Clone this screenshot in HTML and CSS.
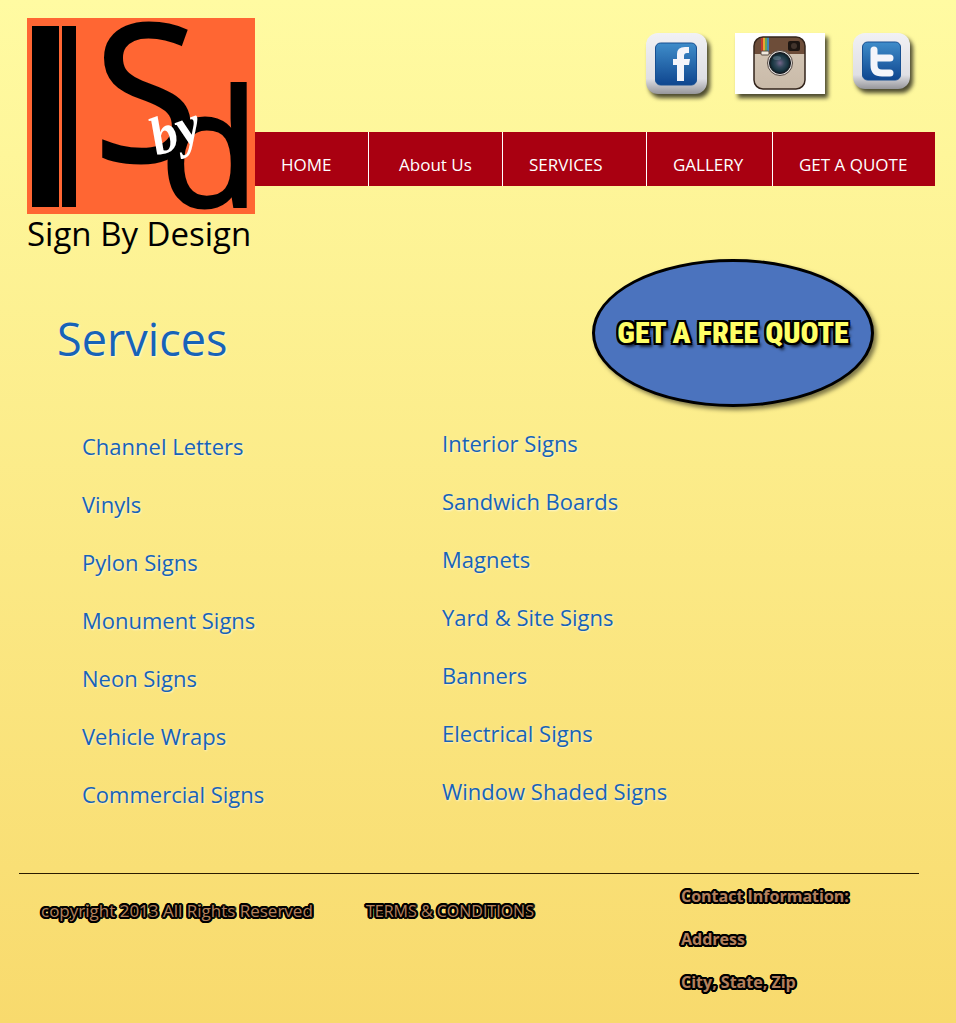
FILE: index.html
```html
<!DOCTYPE html>
<html lang="en">
<head>
<meta charset="utf-8">
<meta name="viewport" content="width=device-width, initial-scale=1">
<title>Sign By Design - Services</title>
<link rel="stylesheet" href="styles.css">
</head>
<body>
<header class="site-header">
  <a class="logo" href="#">
    <svg class="logo-mark" viewBox="0 0 228 196" aria-label="S by d">
      <rect width="228" height="196" fill="#ff6633"/>
      <rect x="5" y="8" width="27" height="181"/>
      <rect x="35" y="8" width="14" height="181"/>
      <text class="logo-s" x="67" y="143">S</text>
      <text class="logo-d" x="133" y="188">d</text>
      <text class="logo-by" transform="translate(130 138) rotate(-20)">by</text>
    </svg>
    <span class="logo-name">Sign By Design</span>
  </a>
  <div class="header-side">
    <div class="social">
      <a class="social-link" href="#" aria-label="Facebook">
        <svg width="62" height="62" viewBox="0 0 62 62">
          <defs>
            <linearGradient id="frame" x1="0" y1="0" x2="0" y2="1"><stop offset="0" stop-color="#f1f1f4"/><stop offset=".75" stop-color="#dfdfe4"/><stop offset="1" stop-color="#96969a"/></linearGradient>
            <linearGradient id="blue" x1="0" y1="0" x2="0" y2="1"><stop offset="0" stop-color="#3f8dca"/><stop offset="1" stop-color="#0f468f"/></linearGradient>
          </defs>
          <rect x="0" y="0" width="61" height="61" rx="12" fill="url(#frame)"/>
          <rect x="9.500" y="10" width="41" height="42" rx="5" fill="url(#blue)" stroke="#174f91"/>
          <path d="M43 14h-4q-8 0-8 7v5h-4v6h4v16h7V32h5l1-6h-6v-3q0-3 3-3h2z" fill="#f4f5fa"/>
        </svg>
      </a>
      <a class="social-link" href="#" aria-label="Instagram">
        <svg width="90" height="62" viewBox="0 0 90 62">
          <defs>
            <linearGradient id="case" x1="0" y1="0" x2="0" y2="1"><stop offset="0" stop-color="#d6c9b7"/><stop offset="1" stop-color="#c9baa9"/></linearGradient>
            <radialGradient id="lens"><stop offset="0" stop-color="#74658a"/><stop offset=".4" stop-color="#35495b"/><stop offset=".75" stop-color="#183540"/><stop offset="1" stop-color="#111a22"/></radialGradient>
            <clipPath id="body"><rect x="19" y="4" width="51" height="52" rx="9"/></clipPath>
          </defs>
          <rect width="90" height="61" fill="#fff"/>
          <g clip-path="url(#body)">
            <rect x="19" y="4" width="51" height="52" fill="url(#case)"/>
            <rect x="19" y="4" width="51" height="17" fill="#6d4d39"/>
            <path d="M26 4h2v15h-2z" fill="#c33b2f"/><path d="M28 4h2v15h-2z" fill="#e8a530"/><path d="M30 4h2v15h-2z" fill="#64a45a"/><path d="M32 4h2v15h-2z" fill="#3f86bb"/>
          </g>
          <rect x="19" y="4" width="51" height="52" rx="9" fill="none" stroke="#33241b" stroke-width="1.500"/>
          <rect x="53" y="8" width="12" height="10" rx="2" fill="#1d1511"/>
          <circle cx="59" cy="13" r="3" fill="#42342c"/>
          <rect x="26" y="18" width="8" height="4" rx="1" fill="#f0eadf" stroke="#564b42"/>
          <circle cx="45" cy="30" r="12.500" fill="#dedad7" stroke="#574b44"/>
          <circle cx="45" cy="30" r="10.500" fill="url(#lens)" stroke="#10151a"/>
          <ellipse cx="42" cy="25" rx="4" ry="2" fill="#8ba6b5" opacity=".35"/>
        </svg>
      </a>
      <a class="social-link" href="#" aria-label="Twitter">
        <svg width="60" height="60" viewBox="0 0 60 60">
          <rect x="1" y="0" width="57" height="56" rx="12" fill="url(#frame)"/>
          <rect x="10.500" y="9" width="38" height="38" rx="5" fill="url(#blue)" stroke="#174f91"/>
          <path d="M22 17v15q0 8 8 8h8M22 25h16" fill="none" stroke="#f4f5fa" stroke-width="7" stroke-linecap="round" stroke-linejoin="round"/>
        </svg>
      </a>
    </div>
    <nav class="nav" aria-label="Main">
      <a class="nav-item" href="#">HOME</a>
      <a class="nav-item nav-about" href="#">About Us</a>
      <a class="nav-item" href="#">SERVICES</a>
      <a class="nav-item" href="#">GALLERY</a>
      <a class="nav-item" href="#">GET A QUOTE</a>
    </nav>
  </div>
</header>
<main>
  <div class="intro">
    <h1 class="title">Services</h1>
    <a class="quote" href="#">GET A FREE QUOTE</a>
  </div>
  <div class="services">
    <ul class="service-list service-list-first">
      <li>Channel Letters</li>
      <li>Vinyls</li>
      <li>Pylon Signs</li>
      <li>Monument Signs</li>
      <li>Neon Signs</li>
      <li>Vehicle Wraps</li>
      <li>Commercial Signs</li>
    </ul>
    <ul class="service-list">
      <li>Interior Signs</li>
      <li>Sandwich Boards</li>
      <li>Magnets</li>
      <li>Yard &amp; Site Signs</li>
      <li>Banners</li>
      <li>Electrical Signs</li>
      <li>Window Shaded Signs</li>
    </ul>
  </div>
</main>
<footer class="site-footer">
  <p class="legal">copyright 2013 All Rights Reserved</p>
  <p class="legal legal-terms"><a href="#">TERMS &amp; CONDITIONS</a></p>
  <address class="contact">
    <span>Contact Information:</span>
    <span>Address</span>
    <span>City, State, Zip</span>
  </address>
</footer>
</body>
</html>
```

FILE: styles.css
```css
* { box-sizing: border-box; }

html { min-height: 100%; background: linear-gradient(#fffba2, #f8da6d); }

body {
  margin: 0;
  font-family: "Open Sans", "Noto Sans", sans-serif;
  color: #000;
}

a { color: inherit; text-decoration: none; }
ul, p, h1 { margin: 0; padding: 0; }
svg { display: block; }

.site-header {
  display: grid;
  grid-template-columns: 228px 1fr;
  padding: 18px 21px 0 27px;
}

.logo { display: block; }
.logo-mark { width: 100%; }
.logo-s { font: 190px "Open Sans", sans-serif; stroke: #000; stroke-width: 3px; }
.logo-d { font: 162px "Open Sans", sans-serif; stroke: #000; stroke-width: 3px; }
.logo-by { font: italic bold 54px "Liberation Serif", serif; fill: #fff; }

.logo-name {
  display: block;
  font-size: 33px;
  line-height: 40px;
  white-space: nowrap;
}

.header-side { padding-top: 15px; }

.social {
  display: flex;
  justify-content: flex-end;
  gap: 27px;
  height: 99px;
  padding-right: 23px;
}
.social-link { filter: drop-shadow(3px 4px 2px rgba(0, 0, 0, 0.7)); align-self: flex-start; }

.nav {
  display: grid;
  grid-template-columns: 113fr 134fr 144fr 126fr 163fr;
  height: 54px;
  background: #a90011;
  color: #fff;
  font-size: 17px;
  font-weight: 500;
  line-height: 22px;
}
.nav-item { padding: 22px 0 0 26px; white-space: nowrap; }
.nav-item + .nav-item { border-left: 1px solid #fff; }
.nav-item.nav-about { padding-left: 30px; }

.intro {
  display: flex;
  justify-content: space-between;
  align-items: center;
  padding: 5px 82px 0 57px;
}
.title {
  color: #1763b8;
  font-size: 45px;
  font-weight: 400;
  line-height: 60px;
  padding-top: 12px;
  text-shadow: 1px 1px 2px rgba(255, 255, 255, 0.6);
}
.quote {
  display: flex;
  align-items: center;
  justify-content: center;
  width: 282px;
  height: 148px;
  border: 3px solid #000;
  border-radius: 50%;
  background: #4b73be;
  box-shadow: 3px 3px 4px rgba(0, 0, 0, 0.5);
  color: #ffff66;
  font-family: Impact, "Roboto Condensed", "Liberation Sans Narrow", sans-serif;
  font-size: 30px;
  font-weight: 900;
  line-height: 40px;
  white-space: nowrap;
  text-shadow:
    2px 0 #000, -2px 0 #000, 0 2px #000, 0 -2px #000,
    2px 2px #000, -2px 2px #000, 2px -2px #000, -2px -2px #000,
    3px 4px 3px rgba(0, 0, 0, 0.7);
}

.services {
  display: grid;
  grid-template-columns: 360fr 514fr;
  padding: 21px 0 0 82px;
}
.service-list {
  display: flex;
  flex-direction: column;
  gap: 28px;
  list-style: none;
  color: #1763b8;
  font-size: 22px;
  font-weight: 500;
  line-height: 30px;
  text-shadow: 1px 1px 2px rgba(255, 255, 255, 0.6);
}
.service-list-first { padding-top: 3px; }

.site-footer {
  display: grid;
  grid-template-columns: 325fr 315fr 238fr;
  margin: 64px 37px 0 19px;
  padding: 10px 0 24px 22px;
  border-top: 1px solid #2a1c00;
  color: #b5805c;
  font-size: 17px;
  line-height: 24px;
  text-shadow:
    2px 0 #000, -2px 0 #000, 0 2px #000, 0 -2px #000,
    1px 2px #000, -1px 2px #000, 1px -2px #000, -1px -2px #000,
    2px 1px #000, -2px 1px #000, 2px -1px #000, -2px -1px #000;
}
.legal { padding-top: 15px; white-space: nowrap; }
.legal-terms { font-size: 16px; }
.contact {
  display: flex;
  flex-direction: column;
  gap: 19px;
  font-size: 16px;
  font-style: normal;
  font-weight: 700;
  white-space: nowrap;
}
```
